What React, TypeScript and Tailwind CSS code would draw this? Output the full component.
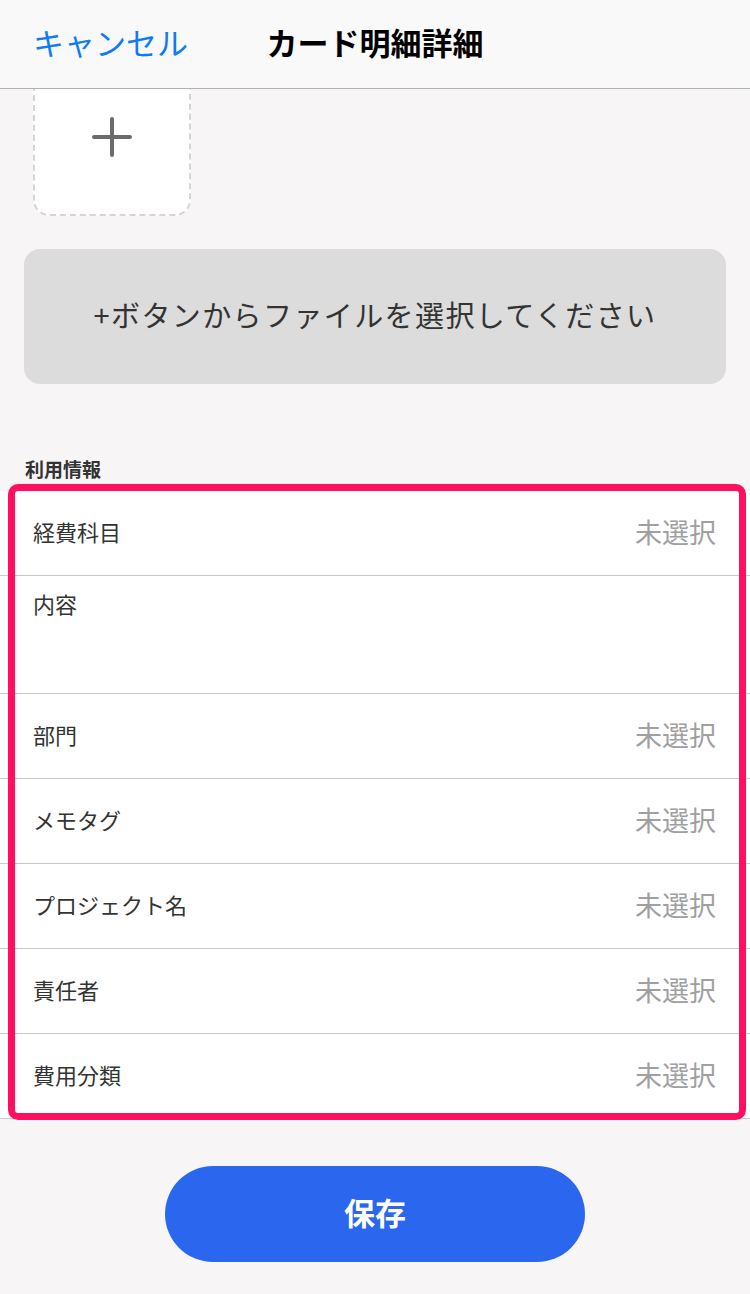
import React from "react";

const rows: { label: string; value?: string; tall?: boolean }[] = [
  { label: "経費科目", value: "未選択" },
  { label: "内容", tall: true },
  { label: "部門", value: "未選択" },
  { label: "メモタグ", value: "未選択" },
  { label: "プロジェクト名", value: "未選択" },
  { label: "責任者", value: "未選択" },
  { label: "費用分類", value: "未選択" },
];

export default function App() {
  return (
    <div
      className="w-[750px] h-[1294px] overflow-hidden bg-[#f7f5f6] flex flex-col"
      style={{ fontFamily: '"Noto Sans CJK JP", "Noto Sans", sans-serif' }}
    >
      <header className="relative z-10 h-[89px] shrink-0 bg-[#f9f9f9] border-b border-[#b3b3b3] flex items-center pb-[6px]">
        <span className="absolute left-[33px] text-[31px] leading-none text-[#0f7bf5]">キャンセル</span>
        <span className="w-full text-center text-[31px] leading-none font-bold text-black">カード明細詳細</span>
      </header>

      <main className="flex flex-col">
        <div className="mt-[-31px] ml-[33px] w-[158px] h-[158px] bg-white border-2 border-dashed border-[#d6d4d5] rounded-[16px] flex items-center justify-center">
          <svg width="40" height="40" viewBox="0 0 40 40">
            <path d="M20 2 V38 M2 20 H38" stroke="#6b6b6b" strokeWidth="4" strokeLinecap="round" />
          </svg>
        </div>

        <div className="mt-[33px] mx-[24px] h-[135px] rounded-[16px] bg-[#dcdcdc] flex items-center justify-center pb-[4px]">
          <span className="text-[29px] leading-none text-[#333333] tracking-[1.4px]">+ボタンからファイルを選択してください</span>
        </div>

        <div className="mt-[71px] h-[28px] pl-[25px] flex items-center pb-[2px]">
          <span className="text-[19px] font-bold text-[#333333] leading-none">利用情報</span>
        </div>

        <div className="relative mt-[8px] bg-white">
          {rows.map((r) => (
            <div
              key={r.label}
              className={
                r.tall
                  ? "h-[118px] border-b border-[#c8c8c8] pl-[33px] pr-[34px] pt-[12px]"
                  : "h-[85px] border-b border-[#c8c8c8] pl-[33px] pr-[34px] flex items-center justify-between pb-[4px]"
              }
            >
              <span className="text-[22px] leading-[30px] text-[#333333]">{r.label}</span>
              {r.value && <span className="text-[27px] leading-none text-[#a0a0a0]">{r.value}</span>}
            </div>
          ))}
          <div className="absolute left-[8px] right-[4px] top-[-7px] bottom-[-1px] border-[7px] border-[#ff0f5f] rounded-[10px] pointer-events-none" />
        </div>

        <div className="mt-[47px] flex justify-center">
          <button className="w-[420px] h-[96px] rounded-full bg-[#2b66ef] text-white text-[31px] font-bold leading-none pb-[6px]">
            保存
          </button>
        </div>
      </main>
    </div>
  );
}
